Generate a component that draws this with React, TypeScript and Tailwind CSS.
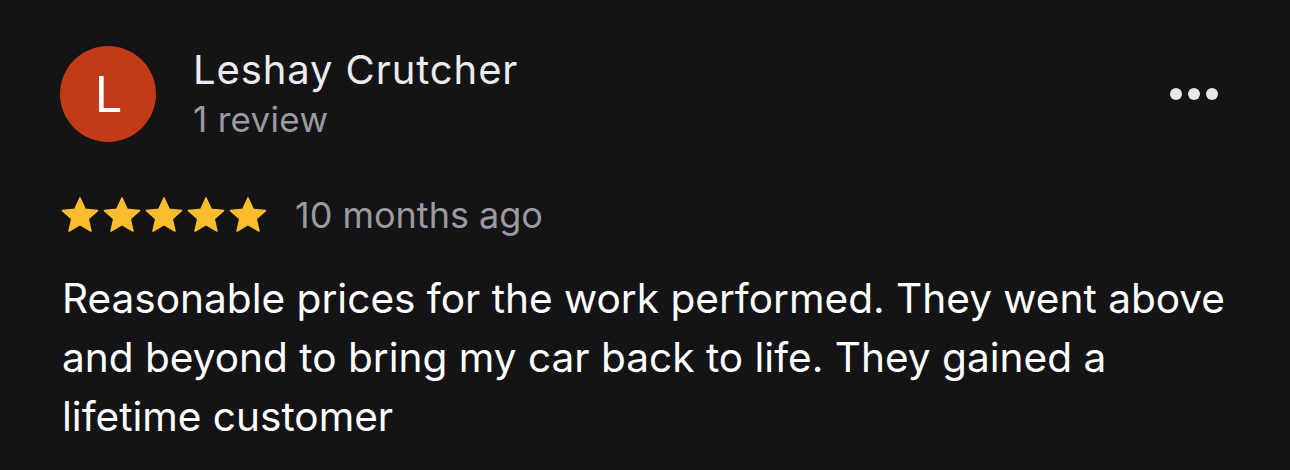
export default function App() {
  return (
    <div
      className="w-[1290px] h-[470px] bg-[#141316] text-white overflow-hidden"
      style={{ fontFamily: "Inter, 'Noto Sans', sans-serif" }}
    >
      <div className="pl-[60px] pr-[30px] pt-[46px]">
        <div className="flex items-start pr-[42px]">
          <div className="w-[96px] h-[96px] rounded-full bg-[#c13b17] flex items-center justify-center shrink-0">
            <span className="text-[49px] leading-none text-white pl-[1px]">L</span>
          </div>
          <div className="ml-[37px] flex-1 pt-[1px]">
            <div className="text-[40px] leading-[46px] tracking-[0.9px] text-[#ececee]">Leshay Crutcher</div>
            <div className="mt-[6px] text-[35px] leading-[40px] tracking-[0.3px] text-[#9b9a9f]">1 review</div>
          </div>
          <div className="flex items-center gap-[6px] mt-[42px]">
            <span className="w-[12px] h-[12px] rounded-full bg-[#e6e6e8]" />
            <span className="w-[12px] h-[12px] rounded-full bg-[#e6e6e8]" />
            <span className="w-[12px] h-[12px] rounded-full bg-[#e6e6e8]" />
          </div>
        </div>

        <div className="flex items-center mt-[53px]">
          <div className="flex items-center gap-[2px]">
            {[0, 1, 2, 3, 4].map((i) => (
              <svg key={i} width="40" height="38" viewBox="0 0 24 23">
                <path
                  d="M12 1.2l3.1 6.9 7.5.7-5.7 5 1.7 7.4L12 17.3l-6.6 3.9 1.7-7.4-5.7-5 7.5-.7z"
                  fill="#fbbd2e"
                  stroke="#fbbd2e"
                  strokeWidth="1"
                  strokeLinejoin="round"
                />
              </svg>
            ))}
          </div>
          <span className="ml-[27px] text-[36px] leading-[40px] text-[#9b9a9f]">10 months ago</span>
        </div>

        <p className="mt-[34px] pl-[2px] text-[40.6px] leading-[59px] text-white max-w-[1190px]">
          Reasonable prices for the work performed. They went above and beyond to bring my car back to life. They
          gained a lifetime customer
        </p>
      </div>
    </div>
  );
}
